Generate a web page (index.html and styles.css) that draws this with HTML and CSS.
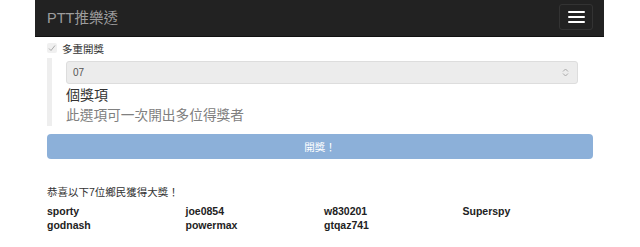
FILE: index.html
```html
<!DOCTYPE html>
<html lang="zh-Hant">
<head>
<meta charset="utf-8">
<link rel="stylesheet" href="styles.css">
</head>
<body>
<nav class="navbar">
  <span class="brand">PTT推樂透</span>
  <span class="toggle"><i></i><i></i><i></i></span>
</nav>
<main class="content">
  <label class="check"><span class="box"><svg width="8" height="8" viewBox="0 0 8 8"><path d="M1 4.5 L3 6.5 L7 1.5" fill="none" stroke="#aaa" stroke-width="1"/></svg></span>多重開獎</label>
  <div class="quote">
    <div class="select"><span>07</span><svg width="7" height="9" viewBox="0 0 7 9"><path d="M1 3.5 L3.5 1 L6 3.5 M1 5.5 L3.5 8 L6 5.5" fill="none" stroke="#aaa" stroke-width="1"/></svg></div>
    <div class="unit">個獎項</div>
    <div class="hint">此選項可一次開出多位得獎者</div>
  </div>
  <div class="btn">開獎！</div>
  <p class="title">恭喜以下7位鄉民獲得大獎！</p>
  <div class="winners">
    <span>sporty</span><span>joe0854</span><span>w830201</span><span>Superspy</span>
    <span>godnash</span><span>powermax</span><span>gtqaz741</span>
  </div>
</main>
</body>
</html>
```
FILE: styles.css
```css
* { box-sizing: border-box; }
body {
  margin: 0;
  background: #fff;
  font-family: "Liberation Sans", "Noto Sans CJK TC", sans-serif;
  color: #333;
}
.navbar {
  margin-left: 35px;
  width: 569px;
  height: 37px;
  background: #222;
  border-bottom: 1px solid #111;
  display: flex;
  align-items: center;
  justify-content: space-between;
  padding: 0 11px 3px 12px;
}
.brand {
  color: #9d9d9d;
  font-size: 14.5px;
}
.toggle {
  width: 34px;
  height: 26px;
  border: 1px solid #333;
  border-radius: 3px;
  display: flex;
  flex-direction: column;
  align-items: center;
  justify-content: center;
  gap: 3px;
}
.toggle i {
  display: block;
  width: 17px;
  height: 2px;
  background: #fff;
  border-radius: 1px;
}
.content {
  padding: 0 47px;
}
.check {
  display: flex;
  align-items: center;
  gap: 5px;
  font-size: 10.5px;
  height: 20px;
  margin-top: 1px;
}
.box {
  width: 10px;
  height: 10px;
  border-radius: 2px;
  background: #f0f0f0;
  display: flex;
  align-items: center;
  justify-content: center;
}
.quote {
  border-left: 5px solid #eee;
  margin-right: 15px;
  padding: 3px 0 0 14px;
}
.select {
  height: 23px;
  background: #ececec;
  border: 1px solid #ddd;
  border-radius: 3px;
  display: flex;
  align-items: center;
  justify-content: space-between;
  padding: 0 8px 0 6px;
  font-size: 10px;
  color: #555;
}
.unit {
  font-size: 14px;
  line-height: 22px;
  color: #333;
}
.hint {
  font-size: 13.7px;
  line-height: 20px;
  color: #808080;
}
.btn {
  margin-top: 8px;
  height: 25px;
  background: #8cb0d9;
  border-radius: 4px;
  color: #fff;
  font-size: 10.5px;
  display: flex;
  align-items: center;
  justify-content: center;
}
.title {
  margin: 25px 0 0;
  font-size: 10.5px;
  line-height: 16px;
}
.winners {
  margin-top: 4px;
  display: grid;
  grid-template-columns: repeat(4, 138.5px);
  font-weight: bold;
  font-size: 10.5px;
  line-height: 14px;
  color: #222;
}
```
